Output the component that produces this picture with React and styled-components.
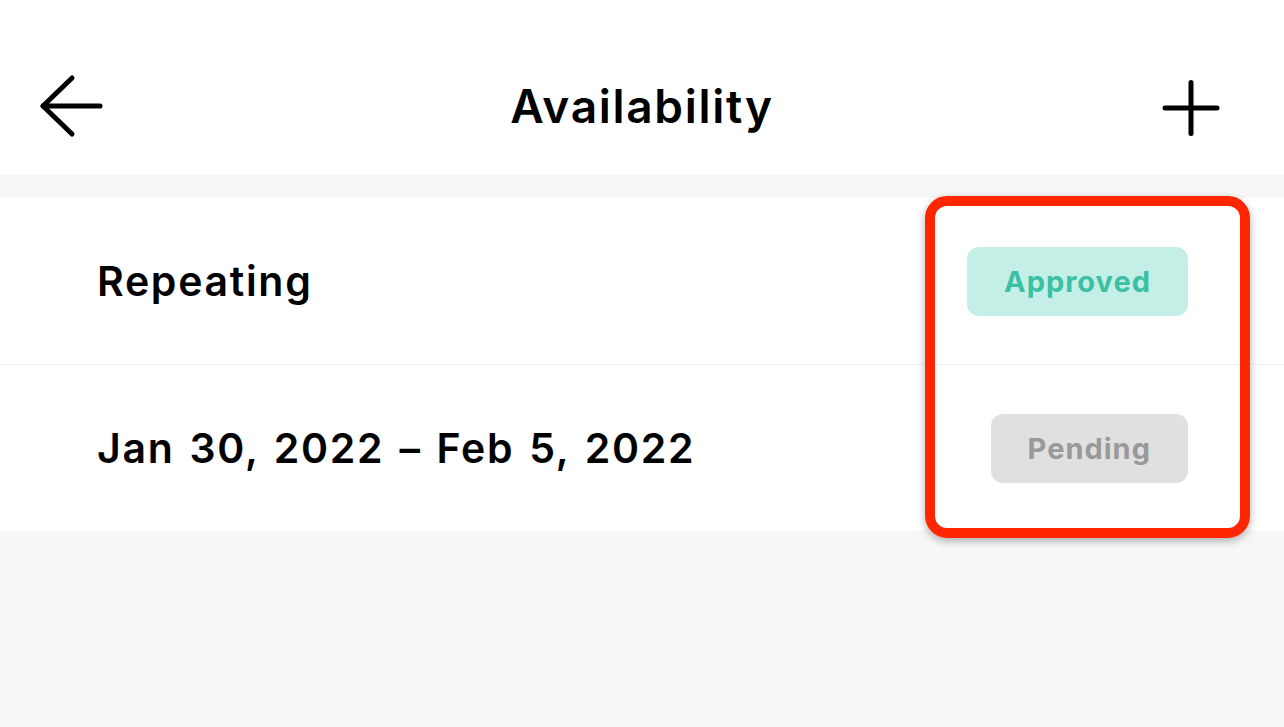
import React from 'react'
import styled, { createGlobalStyle } from 'styled-components'

const GlobalStyle = createGlobalStyle`
  html, body {
    margin: 0;
    padding: 0;
    background: #f7f7f7;
  }
  * {
    box-sizing: border-box;
  }
`

const items = [
  { label: 'Repeating', status: 'approved' },
  { label: 'Jan 30, 2022 – Feb 5, 2022', status: 'pending' },
]

function App() {
  return (
    <Page>
      <GlobalStyle />
      <Header>
        <IconButton aria-label="Back">
          <svg width="64" height="64" viewBox="0 0 64 64" fill="none" stroke="#000" strokeWidth="5" strokeLinecap="round" strokeLinejoin="round">
            <path d="M4 32 H61" />
            <path d="M33 4 L4 32 L33 60" />
          </svg>
        </IconButton>
        <Title>Availability</Title>
        <AddButton aria-label="Add">
          <svg width="60" height="60" viewBox="0 0 60 60" fill="none" stroke="#000" strokeWidth="5" strokeLinecap="round">
            <path d="M4 30 H56" />
            <path d="M30 4.5 V55.5" />
          </svg>
        </AddButton>
      </Header>
      <List>
        {items.map(item => (
          <Row key={item.label}>
            <RowLabel>{item.label}</RowLabel>
            <Badge status={item.status}>
              {item.status === 'approved' ? 'Approved' : 'Pending'}
            </Badge>
          </Row>
        ))}
      </List>
      <Highlight />
    </Page>
  )
}

export default App

const Page = styled.div`
  position: relative;
  min-height: 100vh;
  background: #f7f7f7;
  font-family: Inter, "Noto Sans", sans-serif;
  color: #000;
`

const Header = styled.header`
  height: 175px;
  padding: 36px 39px 0;
  background: #fff;
  display: grid;
  grid-template-columns: 1fr auto 1fr;
  align-items: center;
`

const IconButton = styled.div`
  justify-self: start;
  display: flex;
`

const AddButton = styled(IconButton)`
  justify-self: end;
  margin: 5px 24px 0 0;
`

const Title = styled.h1`
  margin: 0;
  font-size: 46px;
  font-weight: 600;
  letter-spacing: 1.7px;
`

const List = styled.div`
  margin-top: 23px;
  background: #fff;
`

const Row = styled.div`
  height: 166px;
  padding: 0 96px 0 97px;
  display: flex;
  align-items: center;
  justify-content: space-between;
  & + & {
    height: 167px;
    border-top: 1px solid #f0f0f0;
  }
`

const RowLabel = styled.span`
  font-size: 41px;
  font-weight: 600;
  letter-spacing: 1.7px;
  word-spacing: 3px;
`

const Badge = styled.span`
  height: 69px;
  padding: 0 37px;
  border-radius: 12px;
  display: flex;
  align-items: center;
  font-size: 29px;
  font-weight: 700;
  letter-spacing: 1px;
  background: ${p => (p.status === 'approved' ? '#c4efe7' : '#e0e0e0')};
  color: ${p => (p.status === 'approved' ? '#3cc0a4' : '#999999')};
`

const Highlight = styled.div`
  position: absolute;
  left: 925px;
  top: 196px;
  width: 325px;
  height: 342px;
  border: 10px solid #ff2600;
  border-radius: 22px;
  box-shadow: 0 3px 8px rgba(0, 0, 0, 0.3);
  pointer-events: none;
`
